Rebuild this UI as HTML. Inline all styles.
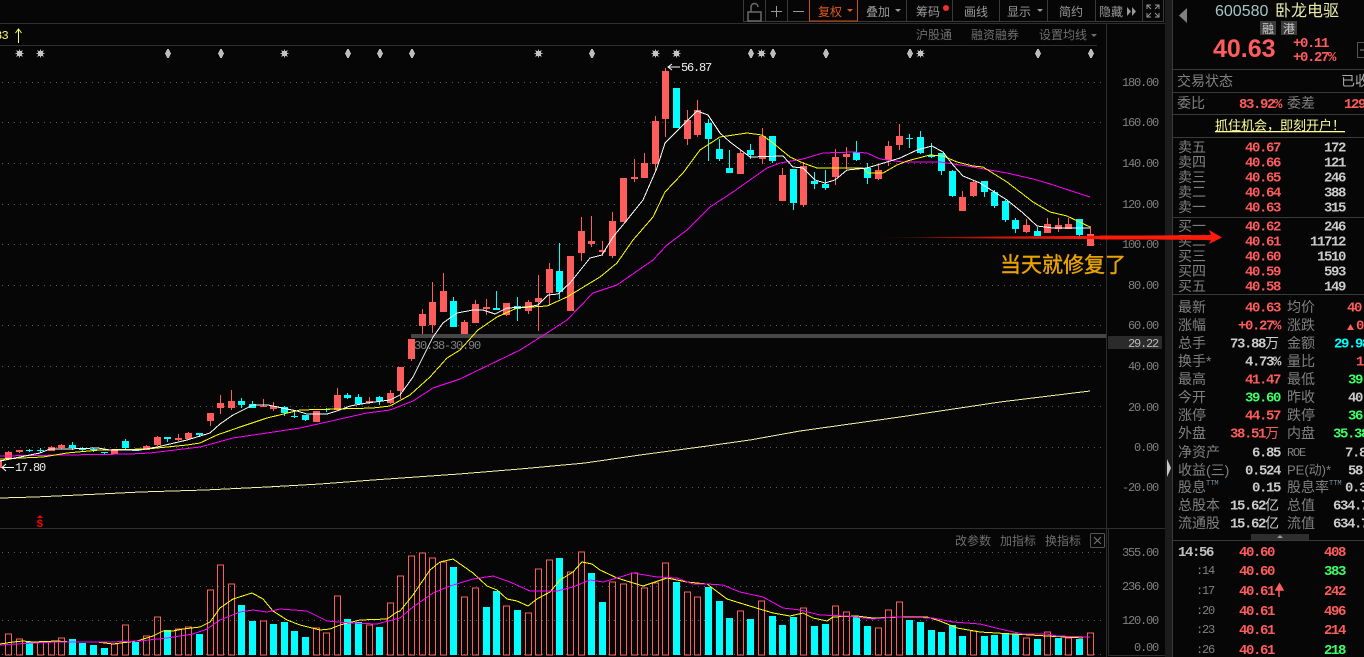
<!DOCTYPE html>
<html><head><meta charset="utf-8"><style>
html,body{margin:0;padding:0;background:#060606;width:1364px;height:657px;overflow:hidden}
svg{display:block;position:absolute;left:0;top:0}
.c{font-family:"Liberation Sans","Noto Sans CJK SC",sans-serif;font-size:14px;fill:#808080}
.t{font-family:"Liberation Sans","Noto Sans CJK SC",sans-serif;font-size:12px;fill:#9a9a9a}
.a{font-family:"Liberation Mono",monospace;font-size:12px;letter-spacing:-1.2px;fill:#808080}
.q{font-family:"Liberation Mono",monospace;font-size:14px;font-weight:bold;letter-spacing:-1.4px}
.r{fill:#ff5c5c}.g{fill:#3cff66}.w{fill:#cccccc}.y{fill:#00ffff}
</style></head><body>
<svg width="1364" height="657" viewBox="0 0 1364 657" xmlns="http://www.w3.org/2000/svg">
<defs>
<g id="st"><path d="M-4 0H4M0-4V4M-3-3L3 3M-3 3L3-3" stroke="#b8b8b8" stroke-width="1"/><rect x="-2.500" y="-2.500" width="5" height="5" fill="#c4c4c4"/></g>
<g id="dm" shape-rendering="crispEdges"><path d="M0-4.500h2v9h-2zM-1-3h4v6h-4zM-2-1h6v2h-6z" fill="#bcbcbc"/></g>
</defs>
<rect width="1364" height="657" fill="#060606"/>
<!-- grid -->
<g stroke="#5c5c5c" stroke-dasharray="1 5" fill="none" shape-rendering="crispEdges">
<path d="M2 82.500H1106M2 122.500H1106M2 163.500H1106M2 204.500H1106M2 244.500H1106M2 285.500H1106M2 325.500H1106M2 366.500H1106M2 406.500H1106M2 447.500H1106M2 487.500H1106M2 552.500H1106M2 586.500H1106M2 620.500H1106M2 654.500H1106"/>
</g>
<!-- frames -->
<g stroke="#2e2e2e" fill="none" shape-rendering="crispEdges">
<path d="M0 23.500H1165M0 45.500H1097M0 528.500H1165M1106.500 23V657M1108.500 528.500V655.500H1165"/>
<path d="M743.500 0V21.500H1163.500V0M765.500 0V21M787.500 0V21M906.500 0V21M952.500 0V21M999.500 0V21M1047.500 0V21M1095.500 0V21M1142.500 0V21" stroke="#3a3a3a"/>
</g>
<rect x="809.500" y="-2" width="48" height="23" fill="none" stroke="#c8501c"/>
<rect x="1165" y="0" width="7" height="657" fill="#1c1c1c"/>
<path d="M1172.500 0V657" stroke="#3a3a3a" shape-rendering="crispEdges"/>
<!-- long MA -->
<path d="M0 498L35 497 100 494 140 492 205 490 267 487 320 484 373 480 459 474 520 469 585 463 640 455 700 447 750 440 800 431 900 417 1000 402 1090 391" fill="none" stroke="#f2f2a8" stroke-width="1" shape-rendering="crispEdges"/>
<!-- candles -->
<path fill="none" stroke="#ff5c5c" shape-rendering="crispEdges" d="M8.500 451V459M19.500 450V453M51.500 446V451M61.500 444V449M146.500 445V450M157.500 436V446M178.500 434V441M188.500 432V440M210.500 413V426M220.500 395V414M231.500 390V410M263.500 399V407M273.500 402V411M337.500 388V410M369.500 397V404M390.500 390V404M400.500 367V399M411.500 339V361M422.500 309V334M432.500 282V333M443.500 273V312M464.500 320V334M475.500 300V323M486.500 299V315M506.500 303V316M528.500 300V314M538.500 275V331M549.500 263V305M581.500 217V261M591.500 216V247M602.500 241V256M612.500 212V258M634.500 159V182M644.500 153V178M655.500 116V170M665.500 68V137M687.500 110V145M697.500 100V137M740.500 150V174M762.500 128V164M782.500 168V201M803.500 162V207M835.500 149V185M846.500 147V169M878.500 164V180M888.500 141V166M899.500 124V150M962.500 191V211M973.500 181V197M1026.500 219V233M1047.500 218V233M1058.500 218V232M1068.500 218V229M1090.500 226V246"/>
<path fill="#ff5c5c" shape-rendering="crispEdges" d="M0 460h2v8h-2zM5 452h7v7h-7zM16 450h7v2h-7zM48 447h7v4h-7zM58 445h7v3h-7zM111 450h7v4h-7zM143 446h7v4h-7zM154 437h7v8h-7zM175 438h7v2h-7zM185 433h7v6h-7zM207 413h7v8h-7zM217 403h7v5h-7zM228 401h7v7h-7zM260 406h7v1h-7zM270 406h7v3h-7zM313 411h7v11h-7zM334 395h7v15h-7zM366 401h7v2h-7zM387 393h7v10h-7zM397 367h7v24h-7zM408 339h7v20h-7zM419 314h7v12h-7zM429 302h7v23h-7zM440 291h7v21h-7zM461 322h7v12h-7zM472 304h7v19h-7zM483 307h7v2h-7zM503 303h7v12h-7zM525 302h7v9h-7zM535 298h7v4h-7zM546 269h7v24h-7zM567 256h7v55h-7zM578 231h7v22h-7zM588 241h7v3h-7zM599 250h7v2h-7zM609 221h7v35h-7zM620 178h7v44h-7zM631 177h7v2h-7zM641 163h7v15h-7zM652 121h7v43h-7zM662 71h7v48h-7zM684 120h7v19h-7zM694 110h7v25h-7zM737 153h7v21h-7zM759 136h7v23h-7zM779 175h7v26h-7zM800 166h7v39h-7zM832 157h7v20h-7zM843 154h7v3h-7zM875 170h7v9h-7zM885 146h7v14h-7zM896 136h7v9h-7zM959 197h7v14h-7zM970 182h7v14h-7zM1023 225h7v7h-7zM1044 224h7v9h-7zM1055 225h7v4h-7zM1065 224h7v5h-7zM1087 234h7v12h-7z"/>
<path fill="none" stroke="#00ffff" shape-rendering="crispEdges" d="M29.500 449V452M40.500 448V453M72.500 442V450M82.500 447V451M93.500 448V452M104.500 452V454M125.500 439V449M167.500 437V442M199.500 433V437M241.500 398V408M252.500 401V408M284.500 406V416M294.500 411V418M305.500 415V421M326.500 408V412M347.500 393V399M358.500 394V405M379.500 396V405M453.500 297V327M496.500 291V310M517.500 297V321M559.500 243V299M708.500 119V161M719.500 139V161M729.500 150V173M750.500 144V159M772.500 136V163M793.500 169V210M814.500 172V189M825.500 170V190M856.500 141V161M867.500 163V184M909.500 134V148M920.500 131V154M931.500 143V158M941.500 153V175M952.500 170V197M984.500 181V197M994.500 190V208M1005.500 200V222M1015.500 218V233M1037.500 227V236M1079.500 219V236"/>
<path fill="#00ffff" shape-rendering="crispEdges" d="M26 450h7v1h-7zM37 450h7v1h-7zM69 445h7v3h-7zM79 449h7v1h-7zM90 449h7v1h-7zM101 452h7v1h-7zM122 441h7v7h-7zM132 450h7v1h-7zM164 437h7v2h-7zM196 433h7v2h-7zM238 401h7v4h-7zM249 404h7v4h-7zM281 407h7v6h-7zM291 416h7v1h-7zM302 415h7v5h-7zM323 409h7v1h-7zM344 395h7v3h-7zM355 397h7v7h-7zM376 397h7v4h-7zM450 301h7v26h-7zM493 308h7v2h-7zM514 306h7v3h-7zM556 271h7v21h-7zM673 88h7v40h-7zM705 123h7v16h-7zM716 149h7v10h-7zM726 168h7v5h-7zM747 150h7v5h-7zM769 136h7v25h-7zM790 169h7v34h-7zM811 181h7v3h-7zM822 184h7v4h-7zM853 152h7v8h-7zM864 168h7v10h-7zM906 138h7v1h-7zM917 137h7v16h-7zM928 155h7v2h-7zM938 153h7v18h-7zM949 171h7v25h-7zM981 181h7v11h-7zM991 192h7v14h-7zM1002 201h7v19h-7zM1012 220h7v9h-7zM1034 231h7v5h-7zM1076 219h7v16h-7z"/>
<!-- support bar -->
<rect x="411" y="334" width="695" height="4" fill="#464646"/>
<rect x="1108" y="336" width="54" height="13" fill="#2b2b2b"/>
<!-- MA lines -->
<g fill="none" stroke-width="1" stroke-linejoin="round" shape-rendering="crispEdges">
<path stroke="#ff00ff" d="M0 456L130 454 150 453 200 447 233 438 267 433 300 428 367 413 390 410 413 401 433 388 460 379 520 350 547 333 567 320 593 293 617 285 653 260 667 245 687 230 710 207 733 192 750 180 767 168 780 163 803 159 823 153 853 152 867 153 880 159 903 162 940 162 967 166 1007 173 1033 179 1047 183 1090 197"/>
<path stroke="#ffff00" d="M0 459L43 457 67 453 100 450 147 449 187 445 200 443 217 435 240 427 267 418 300 410 373 408 390 406 410 395 430 377 447 358 460 350 478 330 497 317 517 308 547 306 567 297 600 277 617 263 633 240 653 217 665 192 683 173 700 150 720 137 747 133 762 135 773 143 790 157 803 163 817 168 863 168 868 173 883 173 897 165 907 161 930 155 943 156 957 162 973 166 983 167 1007 182 1033 202 1050 212 1067 216 1090 227"/>
<path stroke="#ffffff" d="M0 461L20 457 40 453 50 449 67 449 98 448 110 450 140 450 157 447 187 440 210 433 220 424 233 415 247 408 253 405 268 405 287 409 297 411 307 414 327 414 337 411 350 406 367 403 390 400 400 395 413 377 423 357 433 337 443 323 457 313 473 310 483 310 495 314 507 308 527 307 538 305 548 295 558 294 570 283 590 258 602 255 613 237 627 220 643 200 657 168 665 143 683 125 697 111 708 115 720 133 730 142 750 157 783 156 793 167 803 168 815 180 825 183 835 180 847 170 867 168 887 162 900 158 917 150 932 146 943 152 953 165 963 176 980 183 1007 200 1023 213 1037 226 1053 228 1090 228"/>
</g>
<!-- markers -->
<use href="#st" x="19.500" y="53.500"/><use href="#st" x="40.500" y="53.500"/><use href="#dm" x="167" y="53.500"/><use href="#dm" x="220" y="53.500"/><use href="#st" x="284.500" y="53.500"/><use href="#dm" x="347" y="53.500"/><use href="#dm" x="379" y="53.500"/><use href="#dm" x="411" y="53.500"/><use href="#st" x="538.500" y="53.500"/><use href="#dm" x="591" y="53.500"/><use href="#st" x="655.500" y="53.500"/><use href="#st" x="676.500" y="53.500"/><use href="#dm" x="750" y="53.500"/><use href="#st" x="761.500" y="53.500"/><use href="#dm" x="772" y="53.500"/><use href="#dm" x="825" y="53.500"/><use href="#dm" x="909" y="53.500"/><use href="#st" x="920.500" y="53.500"/><use href="#dm" x="1037" y="53.500"/><use href="#dm" x="1090" y="53.500"/>
<!-- header row -->
<text x="-5" y="39" class="a" style="fill:#ffff66;letter-spacing:-.7px">83</text>
<path d="M18.500 29V43M15.500 33L18.500 29 21.500 33" fill="none" stroke="#ffff66"/>
<text x="916" y="39" class="t" style="fill:#6f6f6f">沪股通</text>
<text x="971" y="39" class="t" style="fill:#6f6f6f">融资融券</text>
<text x="1039" y="39" class="t" style="fill:#6f6f6f">设置均线</text>
<path d="M1091 34h6l-3 3z" fill="#6f6f6f"/>
<!-- high low labels -->
<path d="M680 67H668M672 64L668 67 672 70" fill="none" stroke="#fff"/>
<text x="681" y="71" class="a" style="fill:#eee">56.87</text>
<path d="M14 467.500H2M6 464L2 467.500 6 471" fill="none" stroke="#fff"/>
<text x="15" y="471" class="a" style="fill:#eee">17.80</text>
<text x="414" y="349" class="a">30.38-30.90</text>
<!-- S mark -->
<path d="M37 518h6l-3-3z" fill="#f00"/>
<text x="36.500" y="527" style="font:bold 11px 'Liberation Mono',monospace;fill:#f00">S</text>
<!-- axis labels -->
<g class="a">
<text x="1158" y="86" text-anchor="end" class="a">180.00</text>
<text x="1158" y="126" text-anchor="end" class="a">160.00</text>
<text x="1158" y="167" text-anchor="end" class="a">140.00</text>
<text x="1158" y="208" text-anchor="end" class="a">120.00</text>
<text x="1158" y="248" text-anchor="end" class="a">100.00</text>
<text x="1158" y="289" text-anchor="end" class="a">80.00</text>
<text x="1158" y="329" text-anchor="end" class="a">60.00</text>
<text x="1158" y="347" text-anchor="end" class="a" style="fill:#bbb">29.22</text>
<text x="1158" y="370" text-anchor="end" class="a">40.00</text>
<text x="1158" y="411" text-anchor="end" class="a">20.00</text>
<text x="1158" y="451" text-anchor="end" class="a">0.00</text>
<text x="1158" y="491" text-anchor="end" class="a">-20.00</text>
<text x="1158" y="556" text-anchor="end" class="a">355.00</text>
<text x="1158" y="590" text-anchor="end" class="a">236.00</text>
<text x="1158" y="624" text-anchor="end" class="a">120.00</text>
<text x="1158" y="651" text-anchor="end" class="a">0.00</text>
</g>
<!-- volume bars -->
<path fill="none" stroke="#ff5c5c" shape-rendering="crispEdges" d="M5.500 634h6V655h-6zM16.500 639h6V655h-6zM37.500 642h6V655h-6zM48.500 642h6V655h-6zM58.500 638h6V655h-6zM111.500 644h6V655h-6zM122.500 625h6V655h-6zM143.500 636h6V655h-6zM154.500 617h6V655h-6zM175.500 629h6V655h-6zM185.500 627h6V655h-6zM207.500 590h6V655h-6zM217.500 565h6V655h-6zM228.500 584h6V655h-6zM260.500 621h6V655h-6zM313.500 628h6V655h-6zM323.500 633h6V655h-6zM334.500 596h6V655h-6zM366.500 625h6V655h-6zM387.500 603h6V655h-6zM397.500 576h6V655h-6zM408.500 556h6V655h-6zM419.500 553h6V655h-6zM429.500 558h6V655h-6zM440.500 562h6V655h-6zM461.500 597h6V655h-6zM472.500 588h6V655h-6zM503.500 606h6V655h-6zM525.500 613h6V655h-6zM535.500 569h6V655h-6zM546.500 560h6V655h-6zM567.500 572h6V655h-6zM578.500 552h6V655h-6zM609.500 582h6V655h-6zM620.500 584h6V655h-6zM631.500 573h6V655h-6zM641.500 588h6V655h-6zM652.500 583h6V655h-6zM662.500 563h6V655h-6zM684.500 592h6V655h-6zM694.500 597h6V655h-6zM737.500 611h6V655h-6zM758.500 601h6V655h-6zM800.500 608h6V655h-6zM832.500 606h6V655h-6zM843.500 612h6V655h-6zM875.500 628h6V655h-6zM885.500 610h6V655h-6zM896.500 602h6V655h-6zM970.500 631h6V655h-6zM1023.500 638h6V655h-6zM1044.500 632h6V655h-6zM1065.500 638h6V655h-6zM1087.500 633h6V655h-6z"/>
<path fill="#00ffff" shape-rendering="crispEdges" d="M26 642h7V655h-7zM69 639h7V655h-7zM79 643h7V655h-7zM90 645h7V655h-7zM101 648h7V655h-7zM132 642h7V655h-7zM164 630h7V655h-7zM196 634h7V655h-7zM238 605h7V655h-7zM249 621h7V655h-7zM270 624h7V655h-7zM281 622h7V655h-7zM291 631h7V655h-7zM302 637h7V655h-7zM344 619h7V655h-7zM355 622h7V655h-7zM376 627h7V655h-7zM450 567h7V655h-7zM483 607h7V655h-7zM493 591h7V655h-7zM514 610h7V655h-7zM556 558h7V655h-7zM588 573h7V655h-7zM599 602h7V655h-7zM673 582h7V655h-7zM705 587h7V655h-7zM716 601h7V655h-7zM726 618h7V655h-7zM747 619h7V655h-7zM769 616h7V655h-7zM779 625h7V655h-7zM790 617h7V655h-7zM811 626h7V655h-7zM822 624h7V655h-7zM853 617h7V655h-7zM864 626h7V655h-7zM906 620h7V655h-7zM917 622h7V655h-7zM928 630h7V655h-7zM938 632h7V655h-7zM949 625h7V655h-7zM959 636h7V655h-7zM981 636h7V655h-7zM991 635h7V655h-7zM1002 633h7V655h-7zM1012 634h7V655h-7zM1034 639h7V655h-7zM1055 638h7V655h-7zM1076 639h7V655h-7z"/>
<g fill="none" stroke-width="1" stroke-linejoin="round" shape-rendering="crispEdges">
<path stroke="#ffff00" d="M0 644L13 642 23 641 33 642 57 641 70 642 97 642 113 644 137 641 153 636 163 631 173 631 183 629 200 627 210 622 220 608 233 599 252 593 263 599 273 611 287 620 300 625 320 630 330 629 340 625 360 620 387 619 397 612 400 611 413 595 430 570 440 562 453 559 473 573 487 586 497 590 507 599 517 601 528 606 537 599 550 592 560 580 573 572 582 562 592 564 600 570 617 578 643 586 667 578 687 582 707 584 727 599 753 607 773 613 790 616 803 613 813 618 827 621 833 617 857 616 873 618 903 617 927 617 940 621 957 628 980 632 1013 634 1047 636 1083 638"/>
<path stroke="#ff00ff" d="M0 645L33 643 57 642 110 642 140 641 167 638 193 634 207 629 220 620 240 612 253 610 267 612 280 609 307 611 327 621 350 623 377 624 400 618 413 607 433 593 450 586 473 579 493 576 510 582 530 591 557 591 573 587 590 580 603 582 617 578 633 573 657 577 677 578 693 584 707 584 723 585 740 592 763 597 783 608 800 610 820 615 847 616 873 619 893 617 933 618 953 622 980 624 1000 629 1023 634 1047 634 1057 636 1090 637"/>
</g>
<text x="955" y="545" class="t" style="fill:#6f6f6f">改参数</text>
<text x="1000" y="545" class="t" style="fill:#6f6f6f">加指标</text>
<text x="1045" y="545" class="t" style="fill:#6f6f6f">换指标</text>
<rect x="1090.500" y="533.500" width="14" height="14" rx="1" fill="none" stroke="#555"/>
<path d="M1094 537L1101 544M1101 537L1094 544" stroke="#777" fill="none"/>
<!-- toolbar -->
<path d="M748 12h13v9h-13zM751 12V7a3.500 3.500 0 0 1 7 0" fill="none" stroke="#6a6a6a" stroke-width="1.500"/>
<path d="M771 11.500H782M776.500 6V17M793 11.500H804" stroke="#999" fill="none"/>
<text x="818" y="16" class="t" style="fill:#e2581c">复权</text><path d="M847 9h6l-3 3z" fill="#e2581c"/>
<text x="866" y="16" class="t">叠加</text><path d="M895 9h6l-3 3z" fill="#999"/>
<text x="916" y="16" class="t">筹码</text><circle cx="946" cy="8" r="3" fill="#f03030"/>
<text x="964" y="16" class="t">画线</text>
<text x="1007" y="16" class="t">显示</text><path d="M1037 9h6l-3 3z" fill="#999"/>
<text x="1059" y="16" class="t">简约</text>
<text x="1099" y="16" class="t">隐藏</text><path d="M1127 7l4 4.500-4 4.500zM1132 7l4 4.500-4 4.500z" fill="#999"/>
<path d="M1147 9V5H1151M1155 5H1159V9M1159 13V17H1155M1151 17H1147V13M1147 5L1151 9M1159 5L1155 9M1159 17L1155 13M1147 17L1151 13" fill="none" stroke="#999"/>
<!-- right panel -->
<path d="M1187 8V23L1179 15.500Z" fill="#808080"/>
<text x="1215" y="16" style="font:16px 'Liberation Sans',sans-serif;fill:#a6c4c4">600580</text>
<text x="1275" y="16" style="font:16px 'Liberation Sans','Noto Sans CJK SC',sans-serif;fill:#e8eca8">卧龙电驱</text>
<rect x="1260" y="21" width="16" height="14" fill="#3c3c3c"/><rect x="1281" y="21" width="16" height="14" fill="#3c3c3c"/>
<text x="1262" y="33" class="t" style="fill:#ccc">融</text><text x="1283" y="33" class="t" style="fill:#ccc">港</text>
<text x="1213" y="57" style="font:bold 25px 'Liberation Sans',sans-serif;fill:#ff5c5c">40.63</text>
<text x="1293" y="47" class="q r">+0.11</text>
<text x="1293" y="61" class="q r">+0.27%</text>
<rect x="1357.500" y="42.500" width="12" height="15" fill="none" stroke="#555"/><path d="M1360 50h4" stroke="#888"/>
<g stroke="#3a3a3a" shape-rendering="crispEdges"><path d="M1173 69.500H1364M1173 92.500H1364M1173 114.500H1364M1173 137.500H1364M1173 217.500H1364M1173 294.500H1364M1173 540.500H1364"/></g>
<text x="1177" y="86" class="c">交易状态</text><text x="1341" y="86" class="c" style="fill:#aaa">已收</text>
<text x="1177" y="108" class="c">委比</text><text x="1281" y="108" text-anchor="end" class="q r">83.92%</text>
<text x="1287" y="108" class="c">委差</text><text x="1344" y="108" class="q r">129</text>
<text x="1215" y="130" style="font:13px 'Liberation Sans','Noto Sans CJK SC',sans-serif;fill:#ffff99;text-decoration:underline">抓住机会，即刻开户！</text>
<!-- order book -->
<g>
<text x="1178" y="152" class="c">卖五</text><text x="1245" y="151.500" class="q r">40.67</text><text x="1345" y="151.500" text-anchor="end" class="q w">172</text>
<text x="1178" y="167" class="c">卖四</text><text x="1245" y="166.500" class="q r">40.66</text><text x="1345" y="166.500" text-anchor="end" class="q w">121</text>
<text x="1178" y="182" class="c">卖三</text><text x="1245" y="181.500" class="q r">40.65</text><text x="1345" y="181.500" text-anchor="end" class="q w">246</text>
<text x="1178" y="197" class="c">卖二</text><text x="1245" y="196.500" class="q r">40.64</text><text x="1345" y="196.500" text-anchor="end" class="q w">388</text>
<text x="1178" y="212" class="c">卖一</text><text x="1245" y="211.500" class="q r">40.63</text><text x="1345" y="211.500" text-anchor="end" class="q w">315</text>
<text x="1178" y="231" class="c">买一</text><text x="1245" y="230.500" class="q r">40.62</text><text x="1345" y="230.500" text-anchor="end" class="q w">246</text>
<text x="1178" y="246" class="c">买二</text><text x="1245" y="245.500" class="q r">40.61</text><text x="1345" y="245.500" text-anchor="end" class="q w">11712</text>
<text x="1178" y="261" class="c">买三</text><text x="1245" y="260.500" class="q r">40.60</text><text x="1345" y="260.500" text-anchor="end" class="q w">1510</text>
<text x="1178" y="276" class="c">买四</text><text x="1245" y="275.500" class="q r">40.59</text><text x="1345" y="275.500" text-anchor="end" class="q w">593</text>
<text x="1178" y="291" class="c">买五</text><text x="1245" y="290.500" class="q r">40.58</text><text x="1345" y="290.500" text-anchor="end" class="q w">149</text>
</g>
<!-- stats -->
<text x="1178" y="312" class="c">最新</text><text x="1280" y="311.500" text-anchor="end" class="q r">40.63</text><text x="1287" y="312" class="c">均价</text><text x="1347" y="311.500" class="q r">40</text>
<text x="1178" y="330" class="c">涨幅</text><text x="1280" y="329.500" text-anchor="end" class="q r">+0.27%</text><text x="1287" y="330" class="c">涨跌</text><path d="M1347 330l3.500-6 3.500 6z" fill="#ff5c5c"/><text x="1356" y="329.500" class="q r">0</text>
<text x="1178" y="348" class="c">总手</text><text x="1230" y="347.500" class="q w">73.88</text><text x="1265" y="348" class="c" style="fill:#cccccc">万</text><text x="1287" y="348" class="c">金额</text><text x="1334" y="347.500" class="q y">29.98</text>
<text x="1178" y="366" class="c">换手*</text><text x="1280" y="365.500" text-anchor="end" class="q w">4.73%</text><text x="1287" y="366" class="c">量比</text><text x="1356" y="365.500" class="q r">1</text>
<text x="1178" y="384" class="c">最高</text><text x="1280" y="383.500" text-anchor="end" class="q r">41.47</text><text x="1287" y="384" class="c">最低</text><text x="1348" y="383.500" class="q g">39</text>
<text x="1178" y="402" class="c">今开</text><text x="1280" y="401.500" text-anchor="end" class="q g">39.60</text><text x="1287" y="402" class="c">昨收</text><text x="1348" y="401.500" class="q w">40</text>
<text x="1178" y="420" class="c">涨停</text><text x="1280" y="419.500" text-anchor="end" class="q r">44.57</text><text x="1287" y="420" class="c">跌停</text><text x="1348" y="419.500" class="q g">36</text>
<text x="1178" y="438" class="c">外盘</text><text x="1230" y="437.500" class="q r">38.51</text><text x="1265" y="438" class="c" style="fill:#ff5c5c">万</text><text x="1287" y="438" class="c">内盘</text><text x="1333" y="437.500" class="q g">35.38</text>
<text x="1178" y="457" class="c">净资产</text><text x="1280" y="456.500" text-anchor="end" class="q w">6.85</text><text x="1287" y="456" class="a">ROE</text><text x="1345" y="456.500" class="q w">7.8</text>
<text x="1178" y="475" class="c">收益(三)</text><text x="1280" y="474.500" text-anchor="end" class="q w">0.524</text><text x="1287" y="474.500" class="c" style="font-size:13px">PE(动)*</text><text x="1348" y="474.500" class="q w">58</text>
<text x="1178" y="492" class="c">股息</text><text x="1206" y="485" style="font:7px 'Liberation Mono',monospace;fill:#7d8ea0">TTM</text><text x="1280" y="491.500" text-anchor="end" class="q w">0.15</text><text x="1287" y="492" class="c">股息率</text><text x="1329" y="485" style="font:7px 'Liberation Mono',monospace;fill:#7d8ea0">TTM</text><text x="1345" y="491.500" class="q w">0.3</text>
<text x="1178" y="510" class="c">总股本</text><text x="1230" y="509.500" class="q w">15.62</text><text x="1265" y="510" class="c" style="fill:#cccccc">亿</text><text x="1287" y="510" class="c">总值</text><text x="1333" y="509.500" class="q w">634.7</text>
<text x="1178" y="528" class="c">流通股</text><text x="1230" y="527.500" class="q w">15.62</text><text x="1265" y="528" class="c" style="fill:#cccccc">亿</text><text x="1287" y="528" class="c">流值</text><text x="1333" y="527.500" class="q w">634.7</text>
<rect x="1251" y="534" width="58" height="6" fill="#2e2e2e"/><path d="M1277 538h6l-3-3z" fill="#999"/>
<path d="M1167 459V477L1171 468Z" fill="#c8c8c8"/>
<!-- trades -->
<text x="1178" y="556" class="q" style="fill:#c0c0c0">14:56</text><text x="1239" y="556" class="q r">40.60</text><text x="1345" y="556" text-anchor="end" class="q r">408</text>
<text x="1214" y="574" text-anchor="end" class="a">:14</text><text x="1239" y="575" class="q r">40.60</text><text x="1345" y="575" text-anchor="end" class="q g">383</text>
<text x="1214" y="594" text-anchor="end" class="a">:17</text><text x="1239" y="595" class="q r">40.61</text><path d="M1279 597V588M1276 590L1279.500 584 1283 590Z" fill="#ff5c5c" stroke="#ff5c5c" stroke-width="1.500"/><text x="1345" y="595" text-anchor="end" class="q r">242</text>
<text x="1214" y="614" text-anchor="end" class="a">:20</text><text x="1239" y="615" class="q r">40.61</text><text x="1345" y="615" text-anchor="end" class="q r">496</text>
<text x="1214" y="633" text-anchor="end" class="a">:23</text><text x="1239" y="634" class="q r">40.61</text><text x="1345" y="634" text-anchor="end" class="q r">214</text>
<text x="1214" y="653" text-anchor="end" class="a">:26</text><text x="1239" y="654" class="q r">40.61</text><text x="1345" y="654" text-anchor="end" class="q g">218</text>
<!-- annotation -->
<defs><linearGradient id="ar" x1="870" x2="1120" y1="0" y2="0" gradientUnits="userSpaceOnUse"><stop offset="0" stop-color="#ff1a0a" stop-opacity="0"/><stop offset=".5" stop-color="#c81a0c"/><stop offset="1" stop-color="#ff1a0a"/></linearGradient></defs>
<path d="M870 237.500L1212 235V240Z" fill="url(#ar)"/>
<path d="M1100 235.500H1212V239.500H1100Z" fill="#ff1a0a"/>
<path d="M1209 230L1222 237.500 1209 244 1212 237.500Z" fill="#ff1a0a"/>
<text x="1000" y="272" stroke="#eaa400" stroke-width=".4" style="font:21px 'Liberation Sans','Noto Sans CJK SC',sans-serif;fill:#eaa400">当天就修复了</text>
</svg>
</body></html>
